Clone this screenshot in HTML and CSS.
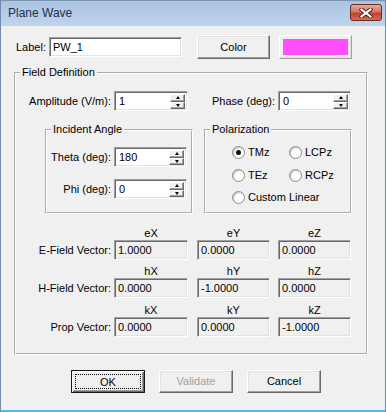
FILE: index.html
```html
<!DOCTYPE html>
<html lang="en">
  <head>
    <meta charset="UTF-8" />
    <title>Plane Wave</title>
    <link rel="stylesheet" href="styles.css">
  </head>
  <body>
    <div class="window">
      <div class="titlebar">
        <span class="title">Plane Wave</span>
        <span class="close-btn">
          <svg width="14" height="10" viewBox="0 0 14 10">
            <path d="M2.5 1.5 L11.5 8.5 M11.5 1.5 L2.5 8.5" stroke="#4a1e19" stroke-width="4" stroke-linecap="square" fill="none" />
            <path d="M2.5 1.5 L11.5 8.5 M11.5 1.5 L2.5 8.5" stroke="#fff" stroke-width="2.2" stroke-linecap="square" fill="none" />
          </svg>
        </span>
      </div>

      <div class="client">
        <div class="top-row">
          <span class="lbl">Label:</span>
          <input class="edit name-edit" type="text" value="PW_1" />
          <button class="btn color-btn">Color</button>
          <div class="swatch"><div class="swatch-fill"></div></div>
        </div>

        <fieldset class="group field-def">
          <legend>Field Definition</legend>

          <div class="amp-row">
            <span class="row-label amp-label">Amplitude (V/m):</span>
            <div class="spin">
              <input class="spin-val" type="text" value="1" />
              <span class="arrows"><span class="arr up"></span><span class="arr down"></span></span>
            </div>
            <span class="row-label phase-label">Phase (deg):</span>
            <div class="spin narrow">
              <input class="spin-val" type="text" value="0" />
              <span class="arrows"><span class="arr up"></span><span class="arr down"></span></span>
            </div>
          </div>

          <div class="groups">
            <fieldset class="group sub incident">
              <legend>Incident Angle</legend>
              <div class="angle-row">
                <span class="row-label angle-label">Theta (deg):</span>
                <div class="spin narrow">
                  <input class="spin-val" type="text" value="180" />
                  <span class="arrows"><span class="arr up"></span><span class="arr down"></span></span>
                </div>
              </div>
              <div class="angle-row">
                <span class="row-label angle-label">Phi (deg):</span>
                <div class="spin narrow">
                  <input class="spin-val" type="text" value="0" />
                  <span class="arrows"><span class="arr up"></span><span class="arr down"></span></span>
                </div>
              </div>
            </fieldset>

            <fieldset class="group sub polar">
              <legend>Polarization</legend>
              <div class="radios">
                <label class="radio-item"><span class="radio checked"></span>TMz</label>
                <label class="radio-item"><span class="radio"></span>LCPz</label>
                <label class="radio-item"><span class="radio"></span>TEz</label>
                <label class="radio-item"><span class="radio"></span>RCPz</label>
                <label class="radio-item wide"><span class="radio"></span>Custom Linear</label>
              </div>
            </fieldset>
          </div>

          <div class="vec vec-e">
            <div class="vec-row">
              <span class="vec-label"></span>
              <span class="head c1">eX</span>
              <span class="head c2">eY</span>
              <span class="head c3">eZ</span>
            </div>
            <div class="vec-row">
              <span class="vec-label row-label">E-Field Vector:</span>
              <input class="edit ro c1" type="text" value="1.0000" readonly />
              <input class="edit ro c2" type="text" value="0.0000" readonly />
              <input class="edit ro c3" type="text" value="0.0000" readonly />
            </div>
          </div>

          <div class="vec vec-h">
            <div class="vec-row">
              <span class="vec-label"></span>
              <span class="head c1">hX</span>
              <span class="head c2">hY</span>
              <span class="head c3">hZ</span>
            </div>
            <div class="vec-row">
              <span class="vec-label row-label">H-Field Vector:</span>
              <input class="edit ro c1" type="text" value="0.0000" readonly />
              <input class="edit ro c2" type="text" value="-1.0000" readonly />
              <input class="edit ro c3" type="text" value="0.0000" readonly />
            </div>
          </div>

          <div class="vec vec-k">
            <div class="vec-row">
              <span class="vec-label"></span>
              <span class="head c1">kX</span>
              <span class="head c2">kY</span>
              <span class="head c3">kZ</span>
            </div>
            <div class="vec-row">
              <span class="vec-label row-label">Prop Vector:</span>
              <input class="edit ro c1" type="text" value="0.0000" readonly />
              <input class="edit ro c2" type="text" value="0.0000" readonly />
              <input class="edit ro c3" type="text" value="-1.0000" readonly />
            </div>
          </div>
        </fieldset>

        <div class="buttons">
          <button class="btn default"><span class="focus">OK</span></button>
          <button class="btn" disabled>Validate</button>
          <button class="btn">Cancel</button>
        </div>
      </div>
    </div>
  </body>
</html>
```

FILE: styles.css
```css
* {
  box-sizing: border-box;
}

body {
  margin: 0;
  font-family: "Liberation Sans", Arial, sans-serif;
  font-size: 11px;
  line-height: 13px;
  color: #000;
}

.window {
  width: 386px;
  height: 412px;
  display: flex;
  flex-direction: column;
  background: #f0f0f0;
  box-shadow: inset 1px 0 #6f8bb0, inset -1px 0 #6f8bb0, inset 0 1px #7d93ae,
    inset 0 -2px #3fc3f2;
}

/* title bar */
.titlebar {
  height: 25px;
  flex: none;
  margin: 1px 1px 0 1px;
  padding: 0 3px 0 7px;
  display: flex;
  justify-content: space-between;
  align-items: flex-start;
  background: linear-gradient(#aac4e4, #bfd4ec);
}

.title {
  font-size: 12px;
  line-height: 25px;
  color: #1e2f45;
}

.close-btn {
  margin-top: 3px;
  width: 32px;
  height: 17px;
  display: flex;
  align-items: center;
  justify-content: center;
  border: 1px solid #6b2c25;
  border-radius: 3px;
  background-color: #c9503d;
  background-image: linear-gradient(#e9ab9f, #d97563 45%, #c4412c 55%, #d36c55);
}

/* client area */
.client {
  flex: 1;
  padding-top: 9px;
}

.top-row {
  height: 24px;
  padding-left: 16px;
  display: flex;
  align-items: center;
}

.lbl {
  width: 33px;
}

.edit {
  height: 20px;
  margin: 0;
  padding: 0 0 0 3px;
  font: inherit;
  color: #000;
  background: #fff;
  border: 1px solid;
  border-color: #a0a0a0 #fff #fff #a0a0a0;
  box-shadow: inset 1px 1px #696969, inset -1px -1px #e3e3e3;
  outline: none;
}

.name-edit {
  width: 133px;
}

.edit.ro {
  background: #f0f0f0;
}

.btn {
  height: 23px;
  width: 74px;
  padding: 0;
  font: inherit;
  color: #000;
  background: #f0f0f0;
  border: 1px solid;
  border-color: #fff #696969 #696969 #fff;
  box-shadow: inset -1px -1px #a0a0a0, inset 1px 1px #e3e3e3;
}

.btn:disabled {
  color: #a0a0a0;
}

.color-btn {
  margin-left: 15px;
  width: 73px;
  height: 24px;
}

.swatch {
  margin-left: 9px;
  width: 73px;
  height: 24px;
  padding: 3px;
  border: 1px solid;
  border-color: #fff #a0a0a0 #a0a0a0 #fff;
  box-shadow: inset -1px -1px #e3e3e3;
  background: #f0f0f0;
}

.swatch-fill {
  height: 100%;
  background: #ff4dff;
}

/* group boxes */
.group {
  margin: 0;
  padding: 0;
  min-width: 0;
  border: 2px groove #fff;
}

.group legend {
  margin-left: 4px;
  padding: 0 2px;
  line-height: 13px;
}

.field-def {
  margin: 7px 18px 0 14px;
  padding-bottom: 16px;
}

.row-label {
  text-align: right;
  padding-right: 3px;
  white-space: nowrap;
}

.amp-row {
  margin-top: 12px;
  display: flex;
  align-items: center;
}

.amp-label {
  width: 98px;
}

.phase-label {
  width: 90px;
}

/* spin boxes */
.spin {
  width: 74px;
  height: 20px;
  display: flex;
  padding: 2px 2px 1px 2px;
  background: #fff;
  border: 1px solid;
  border-color: #a0a0a0 #fff #fff #a0a0a0;
  box-shadow: inset 1px 1px #696969, inset -1px -1px #e3e3e3;
}

.spin.narrow {
  width: 73px;
}

.spin-val {
  flex: 1;
  min-width: 0;
  border: none;
  padding: 0 0 0 2px;
  font: inherit;
  background: transparent;
  outline: none;
}

.arrows {
  width: 15px;
  display: flex;
  flex-direction: column;
}

.arr {
  flex: 1;
  display: flex;
  align-items: center;
  justify-content: center;
  background: #f0f0f0;
  border: 1px solid;
  border-color: #fff #696969 #696969 #fff;
  box-shadow: inset -1px -1px #a0a0a0;
}

.arr::before {
  content: "";
  border-left: 2.5px solid transparent;
  border-right: 2.5px solid transparent;
}

.arr.up::before {
  border-bottom: 3px solid #000;
}

.arr.down::before {
  border-top: 3px solid #000;
}

.groups {
  margin: 12px 0 0 29px;
  display: flex;
  gap: 11px;
}

.sub {
  width: 148px;
  height: 91px;
}

.angle-row {
  margin-top: 11px;
  display: flex;
  align-items: center;
}

.angle-row + .angle-row {
  margin-top: 12px;
}

.angle-label {
  width: 67px;
}

/* radios */
.radios {
  margin-top: 10px;
  padding-left: 26px;
  display: grid;
  grid-template-columns: 57px auto;
  grid-auto-rows: 13px;
  row-gap: 9.5px;
}

.radio-item {
  display: flex;
  align-items: center;
  gap: 3px;
  white-space: nowrap;
}

.radio-item.wide {
  grid-column: 1 / span 2;
}

.radio {
  width: 13px;
  height: 13px;
  flex: none;
  display: flex;
  align-items: center;
  justify-content: center;
  border-radius: 50%;
  border: 1px solid #8d8d8d;
  background: radial-gradient(circle at 60% 60%, #fff 40%, #e1e1e1 100%);
  box-shadow: inset 1px 1px #c7c7c7;
}

.radio.checked::after {
  content: "";
  width: 5px;
  height: 5px;
  border-radius: 50%;
  background: #111;
}

/* vectors */
.vec-e {
  margin-top: 13px;
}

.vec-h {
  margin-top: 5px;
}

.vec-k {
  margin-top: 6px;
}

.vec-row {
  display: flex;
}

.vec-label {
  width: 98px;
  flex: none;
}

.head {
  text-align: center;
  height: 13px;
}

.c1 {
  width: 74px;
}

.c2 {
  width: 73px;
  margin-left: 9px;
}

.c3 {
  width: 73px;
  margin-left: 8px;
}

.vec-row .row-label {
  line-height: 20px;
}

/* dialog buttons */
.buttons {
  margin-top: 15px;
  padding-left: 71px;
  display: flex;
  gap: 14px;
}

.btn.default {
  border: 1px solid #1a1a1a;
  box-shadow: inset 1px 1px #fff, inset -1px -1px #696969, inset -2px -2px #a0a0a0;
  padding: 3px;
}

.focus {
  display: block;
  height: 100%;
  line-height: 13px;
  padding-top: 1px;
  border: 1px dotted #000;
}
```
